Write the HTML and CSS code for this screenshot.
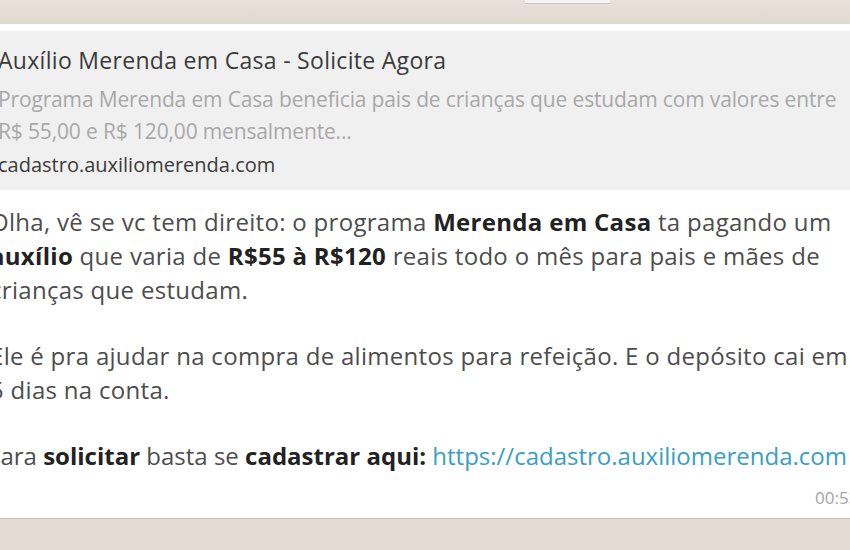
FILE: index.html
```html
<!DOCTYPE html>
<html lang="pt-BR">
  <head>
    <meta charset="UTF-8" />
    <meta name="viewport" content="width=device-width, initial-scale=1.0" />
    <title>Auxílio Merenda em Casa</title>
    <link rel="stylesheet" href="styles.css">
  </head>
  <body>
    <div class="chat">
      <div class="top-strip">
        <div class="prev-msg"></div>
      </div>

      <div class="bubble">
        <a class="preview" href="#">
          <div class="preview-title">Auxílio Merenda em Casa - Solicite Agora</div>
          <div class="preview-desc">
            Programa Merenda em Casa beneficia pais de crianças que estudam com valores entre<br />
            R$ 55,00 e R$ 120,00 mensalmente...
          </div>
          <div class="preview-domain">cadastro.auxiliomerenda.com</div>
        </a>

        <div class="message">
          <p>
            Olha, vê se vc tem direito: o programa <b>Merenda em Casa</b> ta pagando um<br />
            <b>auxílio</b> que varia de <b>R$55 à R$120</b> reais todo o mês para pais e mães de<br />
            crianças que estudam.
          </p>
          <p>
            Ele é pra ajudar na compra de alimentos para refeição. E o depósito cai em<br />
            5 dias na conta.
          </p>
          <p class="cta">
            Para <b>solicitar</b> basta se <b>cadastrar aqui:</b>
            <a class="link" href="#">https://cadastro.auxiliomerenda.com</a>
          </p>
        </div>

        <div class="time">00:53</div>
      </div>
    </div>
  </body>
</html>
```

FILE: styles.css
```css
body {
  margin: 0;
  padding: 0;
  height: 100vh;
  overflow: hidden;
  background-color: #e4dcd4;
  font-family: "Open Sans", "Noto Sans", sans-serif;
  color: #4d4d4d;
}

.chat {
  width: 900px;
  margin-left: -20px;
}

.top-strip {
  height: 24px;
  background: linear-gradient(180deg, #e8e0d9 0%, #e2d9d1 100%);
}

.prev-msg {
  width: 85px;
  height: 3px;
  margin-left: 545px;
  background: #f7f5f3;
  border-bottom: 1px solid #c9c4bf;
}

.bubble {
  background: #fff;
  padding: 7px 5px 10px 5px;
  box-shadow: 0 1px 1px rgba(0, 0, 0, 0.12);
}

.preview {
  display: block;
  background: #f0f0f0;
  padding: 14px 12px 11px 13px;
  text-decoration: none;
  white-space: nowrap;
}

.preview-title {
  font-size: 23px;
  line-height: 30px;
  color: #3b3b3b;
  letter-spacing: 0.3px;
}

.preview-desc {
  margin-top: 8px;
  font-size: 21px;
  line-height: 32px;
  color: #a8a8a8;
  letter-spacing: -0.15px;
}

.preview-domain {
  margin-top: 4px;
  font-size: 20px;
  line-height: 28px;
  color: #3b3b3b;
}

.message {
  padding: 15px 0 0 5px;
  font-size: 24px;
  line-height: 34px;
  letter-spacing: 0.3px;
  white-space: nowrap;
}

.message p {
  margin: 0 0 32px 0;
}

.message p:last-child {
  margin-bottom: 0;
}

.message .cta {
  margin-left: -4px;
  letter-spacing: 0;
}

.message b {
  color: #222;
  font-weight: 700;
}

.link {
  color: #3a9ec6;
  text-decoration: none;
}

.time {
  margin-top: 15px;
  padding-left: 830px;
  font-size: 17px;
  line-height: 20px;
  color: #a5a5a5;
}
```
